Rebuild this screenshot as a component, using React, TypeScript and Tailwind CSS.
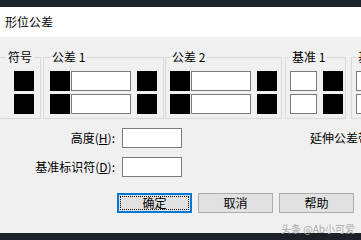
import React from 'react';

const Black = () => <div className="h-[20px] w-[20px] shrink-0 bg-black" />;

const Box = ({ w }: { w: string }) => (
  <div className={`h-[20px] ${w} shrink-0 border border-[#7a7a7a] bg-white`} />
);

const Button = ({ label, focused }: { label: string; focused?: boolean }) =>
  focused ? (
    <button className="flex h-[20px] w-[75px] items-center justify-center border-2 border-[#0078d7] bg-[#e1e1e1] p-[1px]">
      <span className="flex h-full w-full items-center justify-center border border-dotted border-black leading-[14px]">
        {label}
      </span>
    </button>
  ) : (
    <button className="flex h-[20px] w-[75px] items-center justify-center border border-[#adadad] bg-[#e1e1e1] leading-[14px]">
      {label}
    </button>
  );

const App = () => {
  return (
    <div className="relative h-[240px] w-[361px] overflow-hidden font-['Noto_Sans_CJK_SC',sans-serif] text-[12px] text-black">
      <div className="h-[7px] bg-[#1e242b]" />
      <div className="flex h-[30px] items-center bg-white pl-[5px] text-[12px]">形位公差</div>

      <div className="h-[196px] overflow-hidden bg-[#f0f0f0] pt-[13px]">
        {/* groups */}
        <div className="flex items-start whitespace-nowrap">
          <fieldset className="w-[41px] shrink-0 border border-l-0 border-[#d9d9d9] pl-[6px] pt-[7px] pb-[4px]">
            <legend className="px-[2px] leading-[14px]">符号</legend>
            <div className="ml-[8px] flex flex-col gap-[3px]">
              <Black />
              <Black />
            </div>
          </fieldset>

          <fieldset className="ml-[2px] w-[121px] shrink-0 border border-[#d9d9d9] pl-[6px] pt-[7px] pb-[4px]">
            <legend className="px-[2px] leading-[14px]">公差 1</legend>
            <div className="flex flex-col gap-[3px]">
              {[0, 1].map((i) => (
                <div key={i} className="flex">
                  <Black />
                  <div className="ml-[1px]">
                    <Box w="w-[60px]" />
                  </div>
                  <div className="ml-[6px]">
                    <Black />
                  </div>
                </div>
              ))}
            </div>
          </fieldset>

          <fieldset className="ml-[1px] w-[117px] shrink-0 border border-[#d9d9d9] pl-[4px] pt-[7px] pb-[4px]">
            <legend className="px-[2px] leading-[14px]">公差 2</legend>
            <div className="flex flex-col gap-[3px]">
              {[0, 1].map((i) => (
                <div key={i} className="flex">
                  <Black />
                  <div className="ml-[1px]">
                    <Box w="w-[60px]" />
                  </div>
                  <div className="ml-[6px]">
                    <Black />
                  </div>
                </div>
              ))}
            </div>
          </fieldset>

          <fieldset className="ml-[3px] w-[61px] shrink-0 border border-[#d9d9d9] pl-[4px] pt-[7px] pb-[4px]">
            <legend className="px-[2px] leading-[14px]">基准 1</legend>
            <div className="flex flex-col gap-[3px]">
              {[0, 1].map((i) => (
                <div key={i} className="flex">
                  <Box w="w-[27px]" />
                  <div className="ml-[6px]">
                    <Black />
                  </div>
                </div>
              ))}
            </div>
          </fieldset>

          <fieldset className="ml-[5px] w-[61px] shrink-0 border border-[#d9d9d9] pl-[4px] pt-[7px] pb-[4px]">
            <legend className="px-[2px] leading-[14px]">基准 2</legend>
            <div className="flex flex-col gap-[3px]">
              {[0, 1].map((i) => (
                <div key={i} className="flex">
                  <Box w="w-[27px]" />
                  <div className="ml-[6px]">
                    <Black />
                  </div>
                </div>
              ))}
            </div>
          </fieldset>
        </div>

        {/* height / datum identifier */}
        <div className="mt-[9px] flex items-start whitespace-nowrap">
          <div className="flex w-[182px] shrink-0 flex-col gap-[9px]">
            <div className="flex items-center justify-end">
              <span className="leading-[14px]">
                高度(<u>H</u>):
              </span>
              <div className="ml-[7px]">
                <Box w="w-[60px]" />
              </div>
            </div>
            <div className="flex items-center justify-end">
              <span className="leading-[14px]">
                基准标识符(<u>D</u>):
              </span>
              <div className="ml-[7px]">
                <Box w="w-[60px]" />
              </div>
            </div>
          </div>
          <div className="ml-[128px] flex h-[20px] shrink-0 items-center leading-[14px]">延伸公差带:</div>
        </div>

        {/* buttons */}
        <div className="mt-[16px] flex gap-[6px] pl-[117px]">
          <Button label="确定" focused />
          <Button label="取消" />
          <Button label="帮助" />
        </div>
      </div>

      <div className="h-[7px] bg-[#1c2127]" />

      <div className="absolute right-[6px] top-[224px] text-[10px] leading-[10px] text-[#a9a9a9]">头条 @Ab小可爱</div>
    </div>
  );
};

export default App;
